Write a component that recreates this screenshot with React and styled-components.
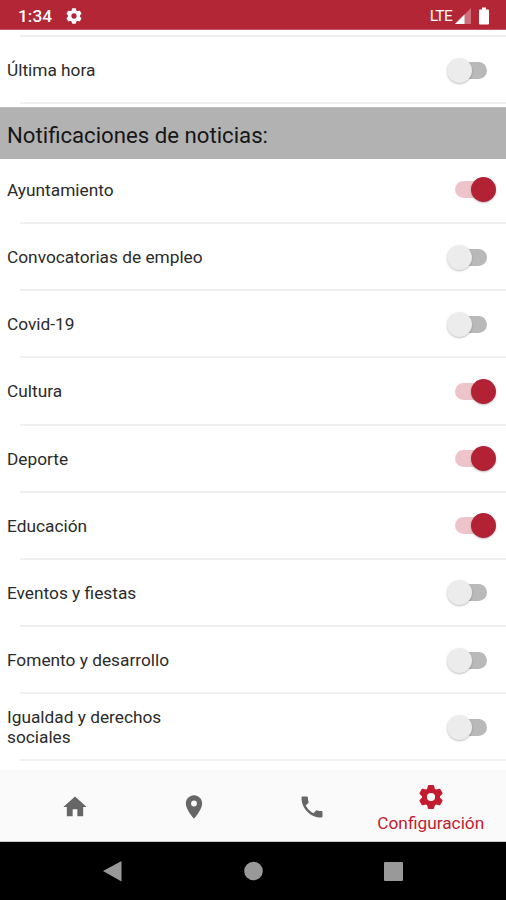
import { useState } from "react";
import styled, { createGlobalStyle } from "styled-components";
import { MdHome, MdPlace } from "react-icons/md";

const GlobalStyle = createGlobalStyle`
  * {
    box-sizing: border-box;
  }

  body {
    margin: 0;
    background: #fff;
    font-family: Roboto, "Liberation Sans", sans-serif;
  }
`;

const Screen = styled.div`
  width: 506px;
  height: 900px;
  display: flex;
  flex-direction: column;
  overflow: hidden;
`;

const StatusBar = styled.header`
  height: 30px;
  flex-shrink: 0;
  padding: 2px 16px 0 18px;
  display: flex;
  align-items: center;
  justify-content: space-between;
  background: #b32636;
  border-bottom: 1px solid #c4586a;
  color: #fff;
`;

const StatusGroup = styled.div`
  display: flex;
  align-items: center;

  svg {
    flex-shrink: 0;
  }
`;

const Clock = styled.span`
  width: 47px;
  font-size: 17.3px;
  font-weight: 500;
`;

const Network = styled.span`
  margin-right: 3px;
  font-size: 15.5px;
  letter-spacing: -0.7px;
`;

const SignalIcon = styled.svg`
  width: 16px;
  height: 16px;
  margin-right: 7px;
`;

const BatteryIcon = styled.svg`
  width: 12px;
  height: 18px;
`;

const List = styled.main`
  flex: 1;
  min-height: 0;
  overflow: hidden;
`;

const Rows = styled.ul`
  list-style: none;
  margin: 0;
  padding: 0;
`;

const TopDivider = styled.div`
  height: 7.2px;
  margin-left: 20px;
  border-bottom: 2px solid #f0f0f0;
`;

const Row = styled.li`
  height: 67.2px;
  padding: 0 19px 1px 7px;
  display: flex;
  align-items: center;
  justify-content: space-between;
  background: linear-gradient(#f0f0f0, #f0f0f0) 20px 100% / 100% 2px no-repeat;
`;

const Label = styled.span`
  width: 202px;
  font-size: 17.3px;
  line-height: 20px;
  color: #2b2b2b;
`;

const SectionTitle = styled.h2`
  position: relative;
  height: 52px;
  margin: 2.4px 0 -2px;
  padding: 3px 7px 0;
  display: flex;
  align-items: center;
  background: #b2b2b2;
  border-top: 1px solid #bcbcbc;
  font-size: 22.2px;
  font-weight: 400;
  color: #161616;
`;

const Track = styled.button`
  width: 32px;
  height: 17px;
  padding: 0;
  display: flex;
  align-items: center;
  border: 0;
  border-radius: 9px;
  background: ${(props) => (props.$on ? "#edc4ca" : "#b9b9b9")};
`;

const Thumb = styled.span`
  width: 25px;
  height: 25px;
  flex-shrink: 0;
  margin-left: ${(props) => (props.$on ? "16px" : "-8.5px")};
  border-radius: 50%;
  background: ${(props) => (props.$on ? "#b32134" : "#ececec")};
  box-shadow: 0 1px 2px rgba(0, 0, 0, 0.25);
`;

const TabBar = styled.nav`
  height: 72px;
  flex-shrink: 0;
  padding: 0 16px;
  display: grid;
  grid-template-columns: repeat(4, 1fr);
  background: #fafafa;
  border-bottom: 1px solid #c8c8c8;
`;

const Tab = styled.a`
  display: flex;
  flex-direction: column;
  align-items: center;
  padding-top: ${(props) => (props.$active ? "13px" : "23px")};
  color: ${(props) => (props.$active ? "#c41b30" : "#666")};

  svg {
    width: 28px;
    height: 28px;
    flex-shrink: 0;
  }
`;

const TabLabel = styled.span`
  margin-top: 2px;
  font-size: 17.3px;
  line-height: 20px;
`;

const SystemBar = styled.footer`
  height: 58px;
  flex-shrink: 0;
  display: flex;
  justify-content: center;
  background: #000;

  svg {
    width: 320px;
    height: 58px;
  }
`;

const news = [
  { name: "Ayuntamiento", enabled: true },
  { name: "Convocatorias de empleo", enabled: false },
  { name: "Covid-19", enabled: false },
  { name: "Cultura", enabled: true },
  { name: "Deporte", enabled: true },
  { name: "Educación", enabled: true },
  { name: "Eventos y fiestas", enabled: false },
  { name: "Fomento y desarrollo", enabled: false },
  { name: "Igualdad y derechos sociales", enabled: false },
];

const teeth = [0, 60, 120, 180, 240, 300];

function GearIcon({ size }) {
  return (
    <svg width={size} height={size} viewBox="-14 -14 28 28">
      <circle r="6.6" fill="none" stroke="currentColor" strokeWidth="5" />
      {teeth.map((angle) => (
        <path
          key={angle}
          d="M-4.2-6.5L-3.2-11q.2-1 1.2-1h4q1 0 1.2 1L4.2-6.5z"
          fill="currentColor"
          transform={`rotate(${angle})`}
        />
      ))}
    </svg>
  );
}

function PhoneIcon() {
  return (
    <svg viewBox="0 0 24 24" fill="currentColor">
      <path d="M6.62 10.79c1.44 2.83 3.76 5.14 6.59 6.59l2.2-2.2c.27-.27.67-.36 1.02-.24 1.12.37 2.33.57 3.57.57.55 0 1 .45 1 1V20c0 .55-.45 1-1 1-9.39 0-17-7.61-17-17 0-.55.45-1 1-1h3.5c.55 0 1 .45 1 1 0 1.25.2 2.45.57 3.57.11.35.03.74-.25 1.02l-2.2 2.2z" />
    </svg>
  );
}

function SettingRow({ item }) {
  const [on, setOn] = useState(item.enabled);

  return (
    <Row>
      <Label>{item.name}</Label>
      <Track
        $on={on}
        role="switch"
        aria-checked={on}
        aria-label={item.name}
        onClick={() => setOn(!on)}
      >
        <Thumb $on={on} />
      </Track>
    </Row>
  );
}

function App() {
  return (
    <Screen>
      <GlobalStyle />
      <StatusBar>
        <StatusGroup>
          <Clock>1:34</Clock>
          <GearIcon size={18} />
        </StatusGroup>
        <StatusGroup>
          <Network>LTE</Network>
          <SignalIcon viewBox="0 0 16 16">
            <path d="M16 0V16H0Z" fill="#fff" opacity="0.35" />
            <path d="M9.5 6.5V16H0Z" fill="#fff" />
          </SignalIcon>
          <BatteryIcon viewBox="0 0 12 18">
            <path
              d="M4 .5h4v2h2q1 0 1 1v13q0 1-1 1H2q-1 0-1-1v-13q0-1 1-1h2z"
              fill="#fff"
            />
          </BatteryIcon>
        </StatusGroup>
      </StatusBar>

      <List>
        <TopDivider />
        <Rows>
          <SettingRow item={{ name: "Última hora", enabled: false }} />
        </Rows>
        <SectionTitle>Notificaciones de noticias:</SectionTitle>
        <Rows>
          {news.map((item) => (
            <SettingRow item={item} key={item.name} />
          ))}
        </Rows>
      </List>

      <TabBar>
        <Tab>
          <MdHome />
        </Tab>
        <Tab>
          <MdPlace />
        </Tab>
        <Tab>
          <PhoneIcon />
        </Tab>
        <Tab $active>
          <GearIcon size={28} />
          <TabLabel>Configuración</TabLabel>
        </Tab>
      </TabBar>

      <SystemBar>
        <svg viewBox="0 0 320 58" fill="#999">
          <path d="M28.5 19v20.5L10 29z" />
          <circle cx="160.5" cy="29" r="9.3" />
          <rect x="291" y="20" width="19" height="19" rx="1" />
        </svg>
      </SystemBar>
    </Screen>
  );
}

export default App;
